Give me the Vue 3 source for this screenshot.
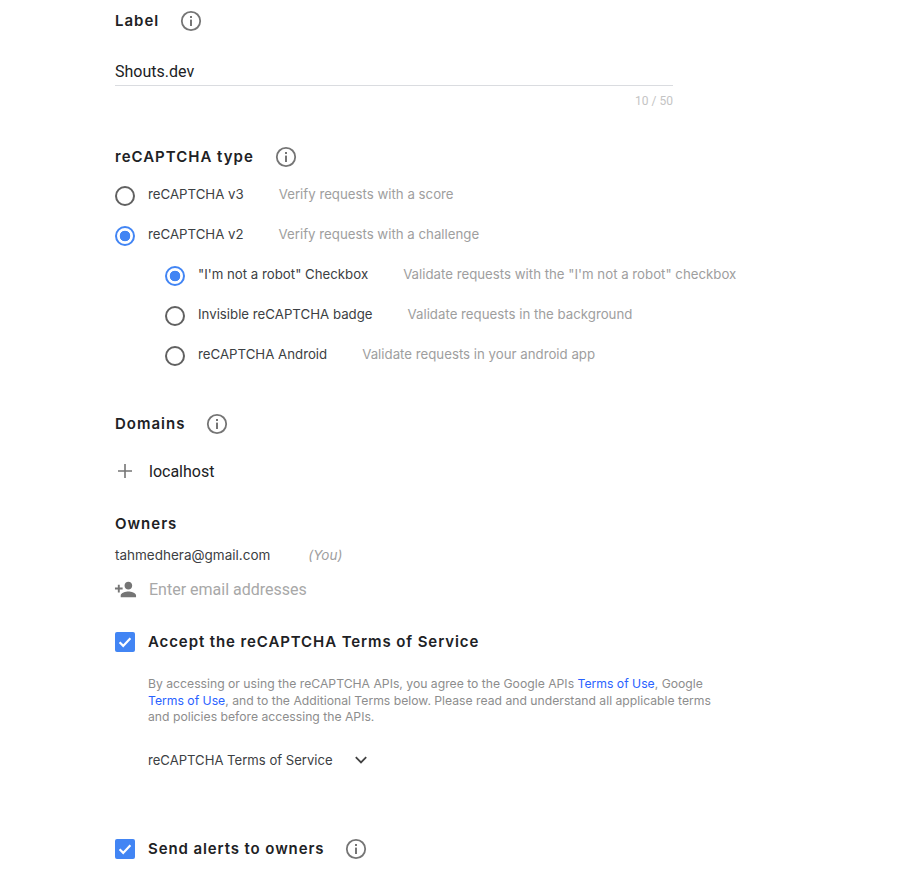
<script setup>
const topRadios = [
  { label: 'reCAPTCHA v3', hint: 'Verify requests with a score', on: false },
  { label: 'reCAPTCHA v2', hint: 'Verify requests with a challenge', on: true }
]
const subRadios = [
  { label: '"I\'m not a robot" Checkbox', hint: 'Validate requests with the "I\'m not a robot" checkbox', on: true },
  { label: 'Invisible reCAPTCHA badge', hint: 'Validate requests in the background', on: false },
  { label: 'reCAPTCHA Android', hint: 'Validate requests in your android app', on: false }
]
</script>

<template>
  <main class="page">
    <section class="label-sec">
      <div class="heading">
        <h2>Label</h2>
        <svg class="info" viewBox="0 0 22 22"><circle cx="11" cy="11" r="9.2" /><rect x="10" y="6" width="2" height="2" /><rect x="10" y="9.6" width="2" height="6.4" /></svg>
      </div>
      <div class="input-value">Shouts.dev</div>
      <div class="counter">10 / 50</div>
    </section>

    <section class="type-sec">
      <div class="heading">
        <h2>reCAPTCHA type</h2>
        <svg class="info" viewBox="0 0 22 22"><circle cx="11" cy="11" r="9.2" /><rect x="10" y="6" width="2" height="2" /><rect x="10" y="9.6" width="2" height="6.4" /></svg>
      </div>
      <div class="radios">
        <div v-for="r in topRadios" :key="r.label" class="radio-row">
          <span class="radio" :class="{ on: r.on }"></span>
          <span class="radio-label">{{ r.label }}</span>
          <span class="radio-hint">{{ r.hint }}</span>
        </div>
        <div v-for="r in subRadios" :key="r.label" class="radio-row sub">
          <span class="radio" :class="{ on: r.on }"></span>
          <span class="radio-label">{{ r.label }}</span>
          <span class="radio-hint">{{ r.hint }}</span>
        </div>
      </div>
    </section>

    <section class="domains-sec">
      <div class="heading">
        <h2>Domains</h2>
        <svg class="info" viewBox="0 0 22 22"><circle cx="11" cy="11" r="9.2" /><rect x="10" y="6" width="2" height="2" /><rect x="10" y="9.6" width="2" height="6.4" /></svg>
      </div>
      <div class="domain-row">
        <svg class="plus" viewBox="0 0 20 20"><path d="M10 3v14M3 10h14" /></svg>
        <span>localhost</span>
      </div>
    </section>

    <section class="owners-sec">
      <div class="heading">
        <h2>Owners</h2>
      </div>
      <div class="owner-row">
        <span class="email">tahmedhera@gmail.com</span>
        <span class="you">(You)</span>
      </div>
      <div class="add-row">
        <svg class="person" viewBox="0 0 24 24"><path d="M15 12c2.21 0 4-1.79 4-4s-1.79-4-4-4-4 1.79-4 4 1.79 4 4 4zm-9-2V7H4v3H1v2h3v3h2v-3h3v-2H6zm9 4c-2.67 0-8 1.34-8 4v2h16v-2c0-2.66-5.33-4-8-4z" /></svg>
        <span>Enter email addresses</span>
      </div>
    </section>

    <section class="terms-sec">
      <div class="check-row">
        <span class="checkbox"><svg viewBox="0 0 20 20"><path d="M4.6 10.3l3.6 3.6 7.2-7.6" /></svg></span>
        <h2>Accept the reCAPTCHA Terms of Service</h2>
      </div>
      <p class="legal">
        By accessing or using the reCAPTCHA APIs, you agree to the Google APIs <a>Terms of Use</a>, Google
        <a>Terms of Use</a>, and to the Additional Terms below. Please read and understand all applicable terms
        and policies before accessing the APIs.
      </p>
      <div class="expander">
        <span>reCAPTCHA Terms of Service</span>
        <svg viewBox="0 0 14 10"><path d="M1.8 2.2L7 7.4l5.2-5.2" /></svg>
      </div>
    </section>

    <section class="alerts-sec">
      <div class="check-row">
        <span class="checkbox"><svg viewBox="0 0 20 20"><path d="M4.6 10.3l3.6 3.6 7.2-7.6" /></svg></span>
        <h2>Send alerts to owners</h2>
        <svg class="info" viewBox="0 0 22 22"><circle cx="11" cy="11" r="9.2" /><rect x="10" y="6" width="2" height="2" /><rect x="10" y="9.6" width="2" height="6.4" /></svg>
      </div>
    </section>
  </main>
</template>

<style scoped>
.page {
  box-sizing: border-box;
  width: 921px;
  height: 878px;
  overflow: hidden;
  padding: 10px 0 0 115px;
  background: #fff;
  font-family: "Inter", "Roboto", sans-serif;
  color: #202124;
}
h2 {
  margin: 0;
  font-size: 15px;
  line-height: 22px;
  font-weight: 600;
  letter-spacing: 1px;
  color: #202124;
}
.heading {
  display: flex;
  align-items: center;
  height: 22px;
}
.info {
  width: 22px;
  height: 22px;
  margin-left: 21px;
  flex: none;
}
.info circle {
  fill: none;
  stroke: #757575;
  stroke-width: 1.8;
}
.info rect {
  fill: #757575;
}
.input-value {
  width: 558px;
  margin-top: 26px;
  height: 28px;
  box-sizing: border-box;
  border-bottom: 1px solid #dadce0;
  font-family: "Roboto", sans-serif;
  font-size: 16px;
  line-height: 27px;
  color: #202124;
}
.counter {
  width: 558px;
  margin-top: 7px;
  text-align: right;
  font-family: "Roboto", sans-serif;
  font-size: 12px;
  line-height: 16px;
  color: #c4c4c4;
}
.type-sec {
  margin-top: 37px;
}
.radios {
  margin-top: 8px;
}
.radio-row {
  display: flex;
  align-items: center;
  height: 40px;
  font-size: 13.25px;
}
.radio-row.sub {
  padding-left: 50px;
}
.radio {
  box-sizing: border-box;
  flex: none;
  width: 20px;
  height: 20px;
  border: 2px solid #616161;
  border-radius: 50%;
}
.radio.on {
  border-color: #4285f4;
  background: radial-gradient(circle, #4285f4 0 5px, transparent 5.6px);
}
.radio-label {
  margin-left: 13px;
  margin-bottom: 4px;
  color: #3c4043;
}
.radio-hint {
  margin-left: 35px;
  margin-bottom: 4px;
  color: #9e9e9e;
}
.domains-sec {
  margin-top: 37px;
}
.domain-row {
  display: flex;
  align-items: center;
  margin-top: 24px;
  height: 24px;
  font-family: "Roboto", sans-serif;
  font-size: 16px;
  color: #202124;
}
.plus {
  width: 20px;
  height: 20px;
  margin-right: 14px;
}
.plus path {
  fill: none;
  stroke: #757575;
  stroke-width: 1.6;
}
.owners-sec {
  margin-top: 30px;
}
.owner-row {
  display: flex;
  align-items: center;
  margin-top: 10px;
  height: 20px;
  font-size: 13.5px;
}
.email {
  color: #3c4043;
}
.you {
  margin-left: 38px;
  font-style: italic;
  color: #9e9e9e;
}
.add-row {
  display: flex;
  align-items: center;
  margin-top: 12px;
  height: 24px;
  font-family: "Roboto", sans-serif;
  font-size: 16px;
  color: #a8a8a8;
}
.person {
  width: 23px;
  height: 23px;
  margin-left: -1px;
  margin-right: 12px;
  fill: #757575;
}
.terms-sec {
  margin-top: 30px;
}
.check-row {
  display: flex;
  align-items: center;
  height: 22px;
}
.check-row h2 {
  margin-left: 13px;
  letter-spacing: 0.9px;
}
.checkbox {
  flex: none;
  width: 20px;
  height: 20px;
  border-radius: 2px;
  background: #4285f4;
  display: flex;
}
.checkbox svg {
  width: 20px;
  height: 20px;
}
.checkbox path {
  fill: none;
  stroke: #fff;
  stroke-width: 2.2;
}
.legal {
  width: 575px;
  margin: 23px 0 0 33px;
  font-size: 12.2px;
  line-height: 16.5px;
  color: #8d8d8d;
}
.legal a {
  color: #2962ff;
}
.expander {
  display: flex;
  align-items: center;
  margin: 24px 0 0 33px;
  height: 20px;
  font-size: 13.1px;
  color: #3c4043;
}
.expander svg {
  width: 14px;
  height: 10px;
  margin-left: 21px;
}
.expander path {
  fill: none;
  stroke: #424242;
  stroke-width: 1.8;
}
.alerts-sec {
  margin-top: 68px;
}
</style>
